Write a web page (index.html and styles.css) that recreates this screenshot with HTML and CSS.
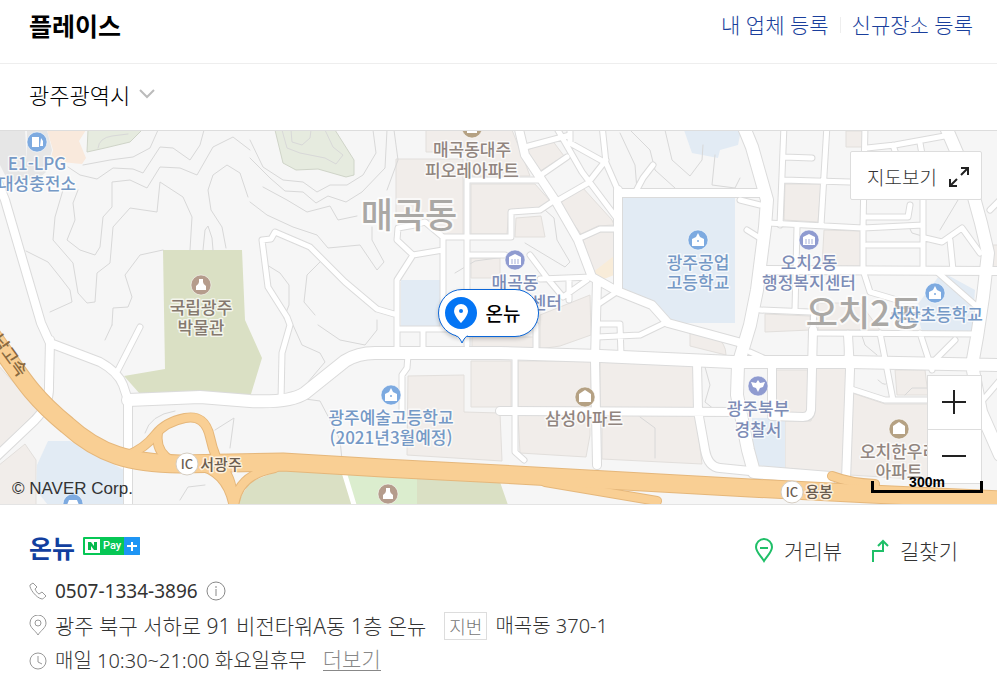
FILE: index.html
```
<!DOCTYPE html>
<html lang="ko">
<head>
    <meta charset="UTF-8">
    <meta name="viewport" content="width=device-width, initial-scale=1">
    <title>플레이스</title>
    <link rel="stylesheet" href="styles.css">
</head>
<body>
    <header class="place-header">
        <h2>플레이스</h2>
        <nav class="header-links">
            <a href="#">내 업체 등록</a>
            <a href="#">신규장소 등록</a>
        </nav>
    </header>

    <div class="filter">
        <label class="region">
            <select aria-label="지역">
                <option>광주광역시</option>
            </select>
            <svg class="chevron" width="16" height="10" viewBox="0 0 16 10"><path d="M1 1l7 7 7-7"/></svg>
        </label>
    </div>

    <div class="map">
        <svg class="map-canvas" viewBox="0 130 997 375" preserveAspectRatio="xMidYMid slice">
            <defs>
                <path id="roads-main" d="M128 400L200 397 250 401Q290 403 305 393L345 361Q358 353 375 353L500 353 600 356 733 362 850 362 997 365M743 125L752 147 767 200 765 227 757 290 750 325 738 365 737 395 748 450 754 472 830 478M945 125L970 183 981 223 988 253 983 297 977 337 972 365 981 412 1000 455"/>
                <path id="roads-mid" d="M-3 180L5 200 24 265 41 323 50 343 100 362Q118 372 123 385L128 400 128 510M50 340L49 385Q50 405 35 420L-5 458M597 280L595 360 597 465M697 362L698 411 705 450Q708 467 720 468L760 472M618 190L618 291M618 193L765 193M765 270L1000 271M518 125L525 155 555 200 578 240 592 277 617 291 652 305 668 323 738 342M813 330L811 410Q810 417 803 417L772 416 772 367M848 335L850 370 846 480M500 411L740 412"/>
                <path id="roads-small" d="M394 314L377 309 345 282 310 247 275 232 271 239 262 240 268 287 287 317 290 325 282 353 281 400M397 352L397 280 413 255 397 240 398 228 415 225 425 222 443 237M413 255L443 250M443 237L443 329M397 329L465 329M467 180L467 345M467 180L538 180M443 237L511 237 511 212 540 210 555 200M467 255L505 255M423 329L423 350M408 355L407 368 402 375 402 416M515 357L515 452 524 460M536 325L536 353M555 125L582 172 618 220M525 147L570 135M570 125L570 143 606 163M602 125L606 163 620 195M606 160L588 183 555 202M567 157L538 177M580 238L600 229 618 229M635 193L643 178 653 165M540 279L592 277M530 255L548 279 563 297 587 280M569 279L569 300M618 291L597 305M620 325L621 355M597 324L620 324M597 337L640 335 667 322M140 327L118 370M784 125L780 225M827 125L821 225M865 125L863 228 863 270 870 292 897 300M768 223L863 228 923 225M923 195L923 270M797 227L795 310M760 310L810 312M784 157L812 158M783 180L850 182M867 148L895 145 950 135M893 145L898 160M920 143L923 160M867 245L923 245M865 217L908 217 910 205M925 238L942 242 962 228 980 253M950 240L953 270M975 305L935 270M760 205L740 200M747 230L763 240M812 333L978 334M814 303L813 333M848 333L847 360M880 333L893 400M920 333L932 370M750 352L770 361M851 389L885 400 930 400M955 340L935 360M990 210L1000 200M1000 380L983 400"/>
            </defs>

            <rect class="land" x="0" y="130" width="997" height="375"/>

            <g class="parcel-gray">
                <path d="M0 130H25L28 178 9 183 0 165Z"/>
                <path d="M31 185L27 170 27 130H47L52 150 46 172Z"/>
            </g>
            <path class="parcel-orange" d="M47 130H86L79 141 86 158 82 164 50 161 53 150Z"/>
            <g class="parcel">
                <path d="M426 130H512L524 160 530 176H467V152H426Z"/>
                <path d="M396 159H463V236H444L425 222 396 216Z"/>
                <path d="M471 184H535L551 202 538 208 509 210 507 234H471Z"/>
                <path d="M516 218L541 216 545 237H515Z"/>
                <path d="M527 150L552 140 564 156 537 173Z"/>
                <path d="M559 204L582 187 612 220 614 225 598 226 581 234Z"/>
                <path d="M583 240L600 232H614V274L594 274Z"/>
                <path d="M471 258H500V278H471Z"/>
                <path d="M472 337H535V349H472ZM540 349V315L590 295 591 335 560 346Z"/>
                <path d="M408 376L464 375V412L500 413 502 461 407 455Z"/>
                <path d="M471 361H511V407H471Z"/>
                <path d="M518 361H591V408H518ZM600 362L695 364V409L600 408Z"/>
                <path d="M518 415H590V435L586 457 520 453ZM602 415H696L702 464 602 459Z"/>
                <path d="M690 327L715 336Q726 343 726 355L690 346Z"/>
                <path d="M785 184H821L818 222 784 220ZM824 230L861 231V266H822Z"/>
                <path d="M846 131H865V147H846Z"/>
                <path d="M765 314L810 316V330L765 332ZM818 303H860L880 330H818Z"/>
                <path d="M774 370L808 370V414H775ZM785 421H811L816 367H848L844 474 785 468Z"/>
                <path d="M852 393L885 404H930V480L850 475Z"/>
                <path d="M895 370H925L928 395H897Z"/>
                <path d="M-2 365L38 410 -2 450ZM-2 505V466L25 444 36 460V505Z"/>
                <path d="M993 245H1000V270H993Z"/>
            </g>
            <path class="parcel-sand" d="M592 273L614 256V275L594 283Z"/>
            <g class="water">
                <path d="M621 197H735V323H668L650 303 621 290Z"/>
                <path d="M401 280H440V326H401Z"/>
                <path d="M684 130H741L738 145 720 150 718 158 692 153Z"/>
                <path d="M48 441L70 441 124 470V505H48L36 490 37 465Z"/>
                <path d="M942 272L975 290 972 331H922L915 308Z"/>
                <path d="M752 418H785V468L754 465Z"/>
            </g>
            <g class="park">
                <path d="M163 250H242L245 320 262 358 251 394H140L124 376 165 369Z"/>
                <path d="M236 505L250 482 280 470 345 474V505ZM345 474L500 482 508 505H345Z"/>
            </g>
            <path class="park-bright" d="M345 474L417 479V505H357Z"/>
            <path class="hill" d="M88 130H142L130 142 105 148 87 152Z"/>
            <path class="hill" d="M275 130H335L354 160V175L346 177 318 169 296 170 283 163Z"/>

            <g class="contours">
                <path d="M98 148Q99 138 112 136L128 134M282 130L287 148 300 153 325 158 336 164 343 155 333 147 325 130M291 130L292 142 302 145 310 138 311 130"/>
                <path d="M68 167L80 175 97 179 113 168 133 169 143 173 160 147 173 148 190 160 200 145 204 130"/>
                <path d="M83 165L110 160 133 157 150 148 158 130"/>
                <path d="M63 190L55 217 53 240 73 263 78 293 87 303 95 302 97 273 110 263 113 227 130 208 157 212 160 182 183 197 192 217 190 250"/>
                <path d="M78 190L73 203 75 220 67 240 80 250 95 255 100 247 103 217 112 207 112 182 130 180 147 188 160 167 180 168 197 175 213 147 233 137 250 150"/>
                <path d="M26 251L48 262 60 277 70 290 72 302 50 312M112 325L113 308 128 307 132 297 125 275 140 255 163 250"/>
                <path d="M226 248L222 227 211 210 208 190 213 175 227 165 240 173 248 197M203 250L205 230 208 226 212 238 213 250"/>
                <path d="M250 140L263 167 283 180 303 182 317 192 330 185 347 185 363 175 376 153 373 130"/>
                <path d="M250 158L270 178 285 191 303 192 316 203 328 196 346 202 362 192 385 168 387 130"/>
                <path d="M263 187L287 200 307 212 330 206 338 220 357 216M394 130L398 160 387 190"/>
                <path d="M250 202L267 215 293 227 317 235 328 248 360 245 377 270 384 262 372 240 372 227"/>
                <path d="M267 265L280 273 289 285 289 305 284 318M320 262L307 275 304 302 315 315"/>
                <path d="M293 325L302 345 320 353 325 362 308 382M318 325L340 340 365 345 377 330 377 320"/>
                <path d="M105 340L112 325M145 433Q150 415 175 411M215 430L234 418 230 448"/>
                <path d="M620 133L635 165 637 190M630 130L650 150 655 170 675 188M665 130L672 160 690 176 702 160 703 145"/>
                <path d="M715 155L712 185 735 188 740 178M545 210L554 218 557 240 570 262 565 267 525 243M455 273L475 261 505 257"/>
                <path d="M305 399L320 401 330 420 340 440 342 460M705 367L710 385 705 402 715 410M640 417L655 428 655 458M627 484L680 490M180 500L188 487 205 485"/>
                <path d="M860 330L865 345 877 355M878 380Q888 390 888 378M905 395L912 388 930 388M908 225L912 233 922 236M940 230L958 200 950 190"/>
            </g>

            <g class="casing">
                <use href="#roads-small" class="small"/>
                <use href="#roads-mid" class="mid"/>
                <use href="#roads-main" class="main"/>
            </g>
            <g class="road">
                <use href="#roads-small" class="small"/>
                <use href="#roads-mid" class="mid"/>
                <use href="#roads-main" class="main"/>
                <path class="small" d="M344 472L355 508"/>
            </g>

            <g class="highway-edge">
                <path class="ramp" d="M128 455Q145 448 155 435T185 418 210 437 224 470 234 508M158 433Q155 452 172 461M195 465Q228 470 234 508M234 508Q236 475 275 468M545 482L657 501M832 476Q850 483 875 484"/>
                <path class="trunk" d="M-12 330C20 375 30 395 67 425 100 455 130 463 180 464L283 462 383 468 500 474 750 488 870 494 1002 500"/>
            </g>
            <g class="highway">
                <path class="ramp" d="M128 455Q145 448 155 435T185 418 210 437 224 470 234 508M158 433Q155 452 172 461M195 465Q228 470 234 508M234 508Q236 475 275 468M545 482L657 501M832 476Q850 483 875 484"/>
                <path class="trunk" d="M-12 330C20 375 30 395 67 425 100 455 130 463 180 464L283 462 383 468 500 474 750 488 870 494 1002 500"/>
            </g>

            <g class="area-names">
                <text x="409" y="228">매곡동</text>
                <text x="864" y="326">오치2동</text>
            </g>

            <g class="poi school">
                <circle cx="37" cy="142" r="10"/>
                <path class="glyph" d="M32 137H39V147H32ZM41 138L43 141V146H40"/>
                <text x="37" y="170">E1-LPG</text>
                <text x="37" y="190">대성충전소</text>
                <circle cx="698" cy="240" r="10"/>
                <path class="glyph" d="M692 246V239L696 237 698 233 700 237 704 239V246Z"/>
                <circle class="dot" cx="698" cy="241" r="1"/>
                <text x="698" y="269">광주공업</text>
                <text x="698" y="289">고등학교</text>
                <circle cx="935" cy="293" r="10"/>
                <path class="glyph" d="M929 299V292L933 290 935 286 937 290 941 292V299Z"/>
                <circle class="dot" cx="935" cy="294" r="1"/>
                <text x="936" y="321">서산초등학교</text>
                <circle cx="391" cy="395" r="10"/>
                <path class="glyph" d="M385 401V394L389 392 391 388 393 392 397 394V401Z"/>
                <circle class="dot" cx="391" cy="396" r="1"/>
                <text x="391" y="424">광주예술고등학교</text>
                <text x="391" y="444">(2021년3월예정)</text>
                <circle cx="73" cy="504" r="10"/>
                <path class="glyph" d="M67 505L69 500H77L79 505Z"/>
            </g>
            <g class="poi office">
                <circle cx="515" cy="260" r="10"/>
                <path class="glyph" d="M509 265V257L515 254 521 257V265Z"/>
                <path class="bars" d="M512 259V264M515 259V264M518 259V264"/>
                <text x="515" y="289">매곡동</text>
                <text x="515" y="309">행정복지센터</text>
                <circle cx="809" cy="240" r="10"/>
                <path class="glyph" d="M803 245V237L809 234 815 237V245Z"/>
                <path class="bars" d="M806 239V244M809 239V244M812 239V244"/>
                <text x="809" y="269">오치2동</text>
                <text x="809" y="289">행정복지센터</text>
                <circle cx="758" cy="386" r="10"/>
                <path class="glyph" d="M751 382L756 383 758 380 760 383 765 382 763 387 760 388 758 392 756 388 753 387Z"/>
                <text x="758" y="415">광주북부</text>
                <text x="758" y="436">경찰서</text>
            </g>
            <g class="poi building">
                <circle cx="472" cy="128" r="10"/>
                <path class="glyph" d="M467 128H477V133H467Z"/>
                <text x="472" y="156">매곡동대주</text>
                <text x="472" y="177">피오레아파트</text>
                <circle cx="585" cy="397" r="10"/>
                <path class="glyph" d="M579 402V394L585 390 591 394V402Z"/>
                <text x="584" y="425">삼성아파트</text>
                <circle cx="899" cy="429" r="10"/>
                <path class="glyph" d="M893 434V426L899 422 905 426V434Z"/>
                <text x="899" y="458">오치한우리</text>
                <text x="899" y="478">아파트</text>
            </g>
            <g class="poi museum">
                <circle cx="201" cy="285" r="10"/>
                <path class="glyph" d="M199 279H203V282Q203 284 206 286V290H196V286Q199 284 199 282Z"/>
                <text x="201" y="314">국립광주</text>
                <text x="201" y="334">박물관</text>
                <circle cx="388" cy="494" r="10"/>
                <path class="glyph" d="M386 488H390V491Q390 493 393 495V499H383V495Q386 493 386 491Z"/>
            </g>
            <g class="junction">
                <circle cx="187" cy="464" r="11"/>
                <text class="ic" x="187" y="469">IC</text>
                <text x="221" y="470">서광주</text>
                <circle cx="792" cy="492" r="11"/>
                <text class="ic" x="792" y="497">IC</text>
                <text x="819" y="497">용봉</text>
                <text class="route" transform="translate(5 359) rotate(54)">남고속</text>
            </g>
        </svg>

        <button class="marker" type="button">
            <svg width="33" height="33" viewBox="0 0 33 33">
                <circle cx="16" cy="16" r="16" fill="#0475f4"/>
                <path d="M16 7a7 7 0 0 0-7 7c0 5 7 12 7 12s7-7 7-12a7 7 0 0 0-7-7zm0 5a2 2 0 1 1 0 4 2 2 0 0 1 0-4z" fill="#fff" fill-rule="evenodd"/>
            </svg>
            <span>온뉴</span>
            <svg class="marker-tip" width="12" height="9" viewBox="0 0 12 9"><path d="M0 0h12v1q-3 0-6 7-3-7-6-7z" fill="#fff"/><path d="M0 1q3 0 6 7 3-7 6-7" fill="none" stroke="#0b66d8"/></svg>
        </button>

        <button class="map-view" type="button">
            지도보기
            <svg width="22" height="22" viewBox="0 0 22 22"><path d="M13 9l7-7M13 2h7v7M9 13l-7 7M2 13v7h7"/></svg>
        </button>

        <div class="zoom">
            <button type="button" aria-label="확대"><svg width="24" height="24" viewBox="0 0 24 24"><path d="M0 12h24M12 0v24"/></svg></button>
            <button type="button" aria-label="축소"><svg width="24" height="24" viewBox="0 0 24 24"><path d="M0 12h24"/></svg></button>
        </div>

        <div class="scale">300m</div>
        <div class="copyright">© NAVER Corp.</div>
    </div>

    <main class="place">
        <div class="place-title">
            <a class="name" href="#">온뉴</a>
            <span class="npay">
                <svg width="15" height="14" viewBox="0 0 15 14"><rect width="15" height="14" fill="#fff"/><path d="M3 3h3l3 4V3h3v8H9L6 7v4H3z" fill="#06b84c"/></svg>
                <span class="pay">Pay</span>
                <svg class="plus" width="16" height="18" viewBox="0 0 16 18"><rect width="16" height="18" fill="#1e95f4"/><path d="M8 5v9M3 9h10" stroke="#fff" stroke-width="2"/></svg>
            </span>
            <div class="actions">
                <a href="#"><svg width="20" height="25" viewBox="0 0 20 25"><path d="M10 23C7 18 2 14 2 9a8 8 0 0 1 16 0c0 5-5 9-8 14zM6 10h8"/></svg>거리뷰</a>
                <a href="#"><svg width="20" height="25" viewBox="0 0 20 25"><path d="M3 24V13h10V3M8 8l5-5 5 5"/></svg>길찾기</a>
            </div>
        </div>

        <ul class="info">
            <li>
                <svg class="icon" width="18" height="18" viewBox="0 0 18 18"><path d="M4 1L1 3c-1 3 6 13 12 14 1 0 2-1 4-3l-4-4-3 2c-2-1-3-3-4-5l2-2z"/></svg>
                <span class="phone">0507-1334-3896</span>
                <button class="help" type="button" aria-label="안내"><svg width="20" height="20" viewBox="0 0 20 20"><circle cx="10" cy="10" r="9"/><path d="M10 8v7M10 5v2"/></svg></button>
            </li>
            <li>
                <svg class="icon" width="18" height="21" viewBox="0 0 18 21"><path d="M9 20C6 15 1 13 1 8a8 8 0 0 1 16 0c0 5-5 7-8 12z"/><circle cx="9" cy="8" r="3"/></svg>
                <span class="address">광주 북구 서하로 91 비전타워A동 1층 온뉴</span>
                <span class="tag">지번</span>
                <span class="lot">매곡동 370-1</span>
            </li>
            <li>
                <svg class="icon" width="18" height="18" viewBox="0 0 18 18"><circle cx="9" cy="9" r="8"/><path d="M9 4v6l4 2"/></svg>
                <span class="hours">매일 10:30~21:00 화요일휴무</span>
                <a class="more" href="#">더보기</a>
            </li>
        </ul>
    </main>
</body>
</html>
```

FILE: styles.css
```
* {
    box-sizing: border-box;
}

body {
    margin: 0;
    background: #fff;
    color: #333;
    font-family: "Noto Sans CJK KR", "Noto Sans", sans-serif;
    font-size: 20px;
    font-weight: 300;
    line-height: 30px;
}

a {
    color: inherit;
    text-decoration: none;
}

button {
    padding: 0;
    border: none;
    background: #fff;
    color: inherit;
    font: inherit;
    cursor: pointer;
}

.place-header {
    display: flex;
    align-items: center;
    justify-content: space-between;
    height: 64px;
    padding: 0 24px 14px 29px;
    border-bottom: 1px solid #eee;
}

.place-header h2 {
    margin: 0;
    color: #000;
    font-size: 25px;
    font-weight: 700;
}

.header-links {
    display: flex;
    align-items: center;
    color: #1a3f9c;
    font-family: "Noto Sans", "Noto Sans CJK KR", sans-serif;
    font-size: 21px;
}

.header-links a + a::before {
    content: "";
    display: inline-block;
    height: 16px;
    margin: 0 11px;
    border-left: 1px solid #eee;
}

.filter {
    display: flex;
    align-items: center;
    height: 66px;
    padding: 0 29px 6px;
}

.region {
    display: flex;
    align-items: center;
    gap: 8px;
}

.region select {
    padding: 0;
    border: none;
    background: none;
    color: #000;
    font: inherit;
    font-size: 22px;
    appearance: none;
}

.chevron {
    fill: none;
    stroke: #bbb;
    stroke-width: 2;
}

/* map */
.map {
    position: relative;
    height: 375px;
    overflow: hidden;
    border-top: 1px solid #ddd;
    border-bottom: 1px solid #e4e4e4;
}

.map-canvas {
    display: block;
    width: 100%;
    height: 100%;
}

.land { fill: #f6f6f6; }
.parcel-gray { fill: #e6e6e6; }
.parcel-orange { fill: #f9e9dc; }
.parcel-sand { fill: #f8ecd9; }
.parcel { fill: #f1edea; stroke: #e2dfdc; }
.water { fill: #e2ebf4; }
.park { fill: #dae0c4; }
.park-bright { fill: #dbedce; }
.hill { fill: #e6ebdf; stroke: #cfd4c8; }

.contours,
.casing,
.road,
.highway,
.highway-edge {
    fill: none;
    stroke-linejoin: round;
    stroke-linecap: round;
}

.contours { stroke: #d8d8d8; }
.casing { stroke: #dbdbdb; }
.road { stroke: #fff; }
.highway-edge { stroke: #e5b77b; }
.highway { stroke: #f9cf94; }

.casing .small { stroke-width: 7px; }
.casing .mid { stroke-width: 10px; }
.casing .main { stroke-width: 14px; }
.road .small { stroke-width: 5px; }
.road .mid { stroke-width: 8px; }
.road .main { stroke-width: 12px; }
.highway-edge .trunk { stroke-width: 19px; }
.highway .trunk { stroke-width: 17px; }
.highway-edge .ramp { stroke-width: 10px; }
.highway .ramp { stroke-width: 8px; }

.map-canvas text {
    font-family: "Noto Sans CJK KR", sans-serif;
    font-size: 17px;
    font-weight: 500;
    text-anchor: middle;
    paint-order: stroke;
    stroke: #fff;
    stroke-opacity: 0.7;
    stroke-width: 3px;
    stroke-linejoin: round;
}

.map-canvas .area-names text {
    fill: #aaa8a5;
    font-size: 35px;
    stroke-width: 4px;
}

.poi circle {
    stroke: #fff;
    stroke-opacity: 0.5;
}

.poi .glyph { fill: #fff; }
.school text { fill: #7599c6; }
.school circle { fill: #7daae0; }
.office text { fill: #7d8cb6; }
.office circle { fill: #8f9bd0; }
.building text { fill: #91857f; }
.building circle { fill: #b5a183; }
.museum text { fill: #85796f; }
.museum circle { fill: #b59c8c; }
.poi .dot { stroke: none; }
.bars { stroke: #a5afd9; }

.junction circle {
    fill: #fff;
    stroke: #d5cdc2;
}

.map-canvas .junction text {
    fill: #6b5d50;
    font-size: 15px;
}

.map-canvas .junction .ic {
    font-size: 13px;
    stroke: none;
}

.map-canvas .junction .route {
    fill: #8a6a40;
    font-size: 17px;
    stroke: none;
}

.marker {
    position: absolute;
    top: 158px;
    left: 49%;
    display: flex;
    align-items: center;
    gap: 8px;
    height: 48px;
    padding: 0 18px 0 6px;
    border: 1px solid #0b66d8;
    border-radius: 24px;
    box-shadow: 0 2px 4px rgba(0, 0, 0, 0.2);
    color: #000;
    font-size: 19px;
    font-weight: 500;
    white-space: nowrap;
    transform: translateX(-50%);
}

.marker-tip {
    position: absolute;
    top: 45px;
    left: 17px;
}

.map-view {
    position: absolute;
    top: 20px;
    right: 15px;
    display: flex;
    align-items: center;
    gap: 11px;
    height: 49px;
    padding: 2px 11px 0 16px;
    border: 1px solid #ddd;
    border-radius: 2px;
    font-size: 19px;
}

.map-view svg,
.zoom svg {
    fill: none;
    stroke: #222;
    stroke-width: 2;
}

.zoom {
    position: absolute;
    top: 244px;
    right: 15px;
    display: flex;
    flex-direction: column;
    border: 1px solid #ddd;
}

.zoom button {
    display: flex;
    align-items: center;
    justify-content: center;
    width: 53px;
    height: 53px;
    padding: 0 1px 1px 0;
}

.zoom button + button {
    height: 54px;
    border-top: 1px solid #ddd;
}

.scale {
    position: absolute;
    right: 14px;
    bottom: 11px;
    width: 112px;
    height: 12px;
    border: 3px solid #000;
    border-top: none;
    color: #000;
    font-family: "Liberation Sans", Arial, sans-serif;
    font-size: 14px;
    font-weight: 700;
    line-height: 2px;
    text-align: center;
}

.copyright {
    position: absolute;
    left: 12px;
    bottom: 5px;
    font-family: "Liberation Sans", Arial, sans-serif;
    font-size: 17px;
    font-weight: 400;
    line-height: 20px;
}

/* place info */
.place {
    padding: 25px 28px 16px 29px;
}

.place-title {
    display: flex;
    align-items: center;
    gap: 8px;
}

.name {
    color: #123f9f;
    font-size: 25px;
    font-weight: 700;
}

.npay {
    display: flex;
    align-items: center;
    overflow: hidden;
    height: 18px;
    margin-bottom: 2px;
    padding-left: 2px;
    border-radius: 1px;
    background: #06c755;
}

.pay {
    padding: 0 3px;
    color: #fff;
    font-family: Roboto, sans-serif;
    font-size: 11px;
    font-weight: 500;
}

.actions {
    display: flex;
    gap: 28px;
    margin-left: auto;
    padding: 6px 11px 0 0;
}

.actions a {
    display: flex;
    align-items: center;
    gap: 10px;
    font-size: 21px;
    line-height: 28px;
}

.actions svg {
    fill: none;
    stroke: #1fbf68;
    stroke-width: 2;
}

.info {
    margin: 9px 0 0;
    padding: 0;
    list-style: none;
}

.info li {
    display: flex;
    align-items: center;
    height: 35px;
}

.icon {
    margin-right: 8px;
    fill: none;
    stroke: #999;
}

.phone,
.address,
.lot,
.hours {
    font-family: "Noto Sans", "Noto Sans CJK KR", sans-serif;
}

.phone {
    font-size: 19px;
    font-weight: 400;
}

.help {
    display: flex;
    margin-left: 8px;
}

.help svg {
    fill: none;
    stroke: #888;
}

.address {
    font-size: 21px;
}

.tag {
    margin: 0 8px 0 18px;
    padding: 0 4px;
    border: 1px solid #ddd;
    color: #777;
    font-size: 18px;
    line-height: 26px;
}

.more {
    margin: 0 0 4px 16px;
    color: #888;
    border-bottom: 1px solid #888;
    font-size: 21px;
    line-height: 24px;
}
```
